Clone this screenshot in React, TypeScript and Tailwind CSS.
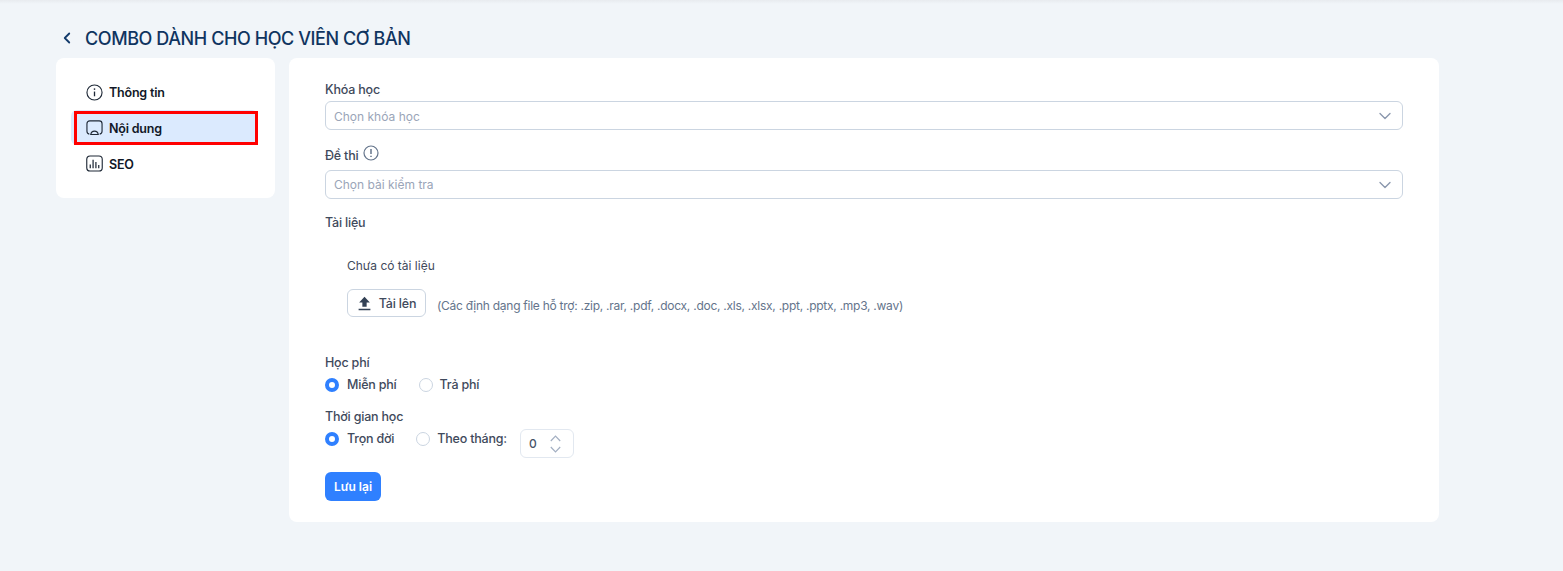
import { ChevronDown, ChevronLeft } from "lucide-react";

function Select({ placeholder, low }: { placeholder: string; low?: boolean }) {
  return (
    <div className="flex h-[29px] items-center justify-between rounded-md border border-[#cbd5e1] bg-white pl-[8px] pr-[7px]">
      <span className={low ? "pt-[3px] text-[12px] text-[#9aa5b8]" : "pt-[1px] text-[12px] text-[#9aa5b8]"}>{placeholder}</span>
      <ChevronDown className="h-[20px] w-[20px] text-[#8a97ad]" strokeWidth={1.6} />
    </div>
  );
}

function Radio({ checked, label }: { checked?: boolean; label: string }) {
  return (
    <div className={checked ? "flex items-center gap-[8px]" : "flex items-center gap-[7px]"}>
      {checked ? (
        <span className="h-[14px] w-[14px] rounded-full border-[4px] border-[#2f80ff] bg-white" />
      ) : (
        <span className="h-[14px] w-[14px] rounded-full border border-[#cbd5e1] bg-white" />
      )}
      <span className="text-[12.500px] font-medium tracking-[-0.2px] text-[#3f4a5c]">{label}</span>
    </div>
  );
}

const label = "text-[12.500px] font-medium leading-[22px] tracking-[-0.2px] text-[#3f4a5c]";
const nav = "flex items-center gap-[6px] pl-[15px] text-[12.500px] font-semibold tracking-[-0.2px] text-[#111827]";

export default function App() {
  return (
    <div className="h-[571px] w-[1563px] overflow-hidden bg-[#f1f5f9] font-['Inter',sans-serif]">
      <div className="h-[4px] bg-gradient-to-b from-[#e8ebef] to-[#f1f5f9]" />
      <div className="flex h-[54px] items-center pl-[58px] pt-[14px]">
        <ChevronLeft className="h-[18px] w-[18px] text-[#123a6b]" strokeWidth={2.4} />
        <h1 className="ml-[9px] text-[18px] font-medium tracking-[-0.42px] text-[#0f3460]">COMBO DÀNH CHO HỌC VIÊN CƠ BẢN</h1>
      </div>
      <div className="flex items-start gap-[14px] pl-[56px]">
        <aside className="h-[140px] w-[219px] rounded-lg bg-white pl-[15px] pr-[17px] pt-[16px]">
          <div className={`${nav} h-[36px]`}>
            <svg width="17" height="17" viewBox="0 0 18 18" fill="none" stroke="#1f2937" strokeWidth="1.200">
              <circle cx="9" cy="9" r="8" />
              <path d="M9 8v5" strokeWidth="1.400" />
              <path d="M9 4.600v1.600" strokeWidth="1.500" />
            </svg>
            <span className="pt-[2px]">Thông tin</span>
          </div>
          <div className={`${nav} relative h-[35px] rounded-md bg-[#dbeafe]`}>
            <span className="absolute bottom-0 left-[3px] right-0 top-[1px] border-[3px] border-[#ff0000]" />
            <svg width="17" height="17" viewBox="0 0 18 18" fill="none" stroke="#1f2937" strokeWidth="1.200">
              <path d="M3.500 16C1.800 15.700 1 14.700 1 13V5C1 3 2.300 2 4 2h10c1.700 0 3 1 3 3v8c0 1.700-.8 2.700-2.500 3" />
              <path d="M5 16.400c.3-2 2-3.600 4-3.600s3.700 1.600 4 3.600z" />
            </svg>
            <span className="pt-[4px]">Nội dung</span>
          </div>
          <div className={`${nav} h-[37px]`}>
            <svg width="17" height="17" viewBox="0 0 18 18" fill="none" stroke="#1f2937" strokeWidth="1.200">
              <rect x="0.800" y="1" width="16.400" height="16" rx="3.500" />
              <path d="M4.500 10v4M7.500 5v9M10.500 7.500v6.500M13.500 10.500v3.500" strokeWidth="1.300" />
            </svg>
            <span className="pt-[4px]">SEO</span>
          </div>
        </aside>
        <main className="h-[464px] w-[1150px] rounded-lg bg-white px-[36px] pt-[21px]">
          <div className={`h-[22px] ${label}`}>Khóa học</div>
          <Select placeholder="Chọn khóa học" low />
          <div className={`mt-[13px] flex h-[27px] items-start gap-[5px] ${label}`}>
            <span className="pt-[2px]">Đề thi</span>
            <svg width="16" height="16" viewBox="0 0 16 16" fill="none" stroke="#64748b" strokeWidth="1.200" className="mt-[2px]">
              <circle cx="8" cy="8" r="7" />
              <path d="M8 4v5" strokeWidth="1.500" />
              <path d="M8 10.700v1.300" strokeWidth="1.500" />
            </svg>
          </div>
          <Select placeholder="Chọn bài kiểm tra" />
          <div className={`mt-[13px] ${label}`}>Tài liệu</div>
          <div className="pl-[22px]">
            <div className="mt-[22px] text-[12px] leading-[20px] text-[#3f4a5c]">Chưa có tài liệu</div>
            <div className="mt-[13px] flex items-center gap-[11px]">
              <div className="flex h-[28px] w-[79px] items-center justify-center gap-[7px] rounded-md border border-[#cbd5e1] bg-white text-[12.500px] font-medium tracking-[-0.2px] text-[#3f4a5c]">
                <svg width="15" height="15" viewBox="0 0 14 14" fill="#334155">
                  <path d="M7 .8 12 6H9v4H5V6H2zM1.500 12h11v1.400h-11z" />
                </svg>
                <span className="pt-[2px]">Tải lên</span>
              </div>
              <span className="mt-[5px] text-[12px] tracking-[-0.26px] text-[#64748b]">
                (Các định dạng file hỗ trợ: .zip, .rar, .pdf, .docx, .doc, .xls, .xlsx, .ppt, .pptx, .mp3, .wav)
              </span>
            </div>
          </div>
          <div className={`mt-[35px] ${label}`}>Học phí</div>
          <div className="mt-[1px] flex h-[20px] items-center gap-[22px]">
            <Radio checked label="Miễn phí" />
            <Radio label="Trả phí" />
          </div>
          <div className={`mt-[11px] ${label}`}>Thời gian học</div>
          <div className="mt-[1px] flex items-start">
            <div className="flex h-[20px] items-center gap-[22px]">
              <Radio checked label="Trọn đời" />
              <Radio label="Theo tháng:" />
            </div>
            <div className="ml-[13px] flex h-[29px] w-[54px] items-center justify-between rounded-md border border-[#e2e8f0] pl-[8px] pr-[12px]">
              <span className="text-[12px] font-medium text-[#475569]">0</span>
              <span className="flex flex-col gap-[4px]">
                <svg width="11" height="7" viewBox="0 0 11 7" fill="none" stroke="#a3afc2" strokeWidth="1.200">
                  <path d="M.8 6 5.500 1.200 10.200 6" />
                </svg>
                <svg width="11" height="7" viewBox="0 0 11 7" fill="none" stroke="#a3afc2" strokeWidth="1.200">
                  <path d="M.8 1 5.500 5.800 10.200 1" />
                </svg>
              </span>
            </div>
          </div>
          <div className="mt-[14px] flex h-[29px] w-[56px] items-center justify-center rounded-md bg-[#2f80ff] text-[12px] font-semibold text-white">
            Lưu lại
          </div>
        </main>
      </div>
    </div>
  );
}
